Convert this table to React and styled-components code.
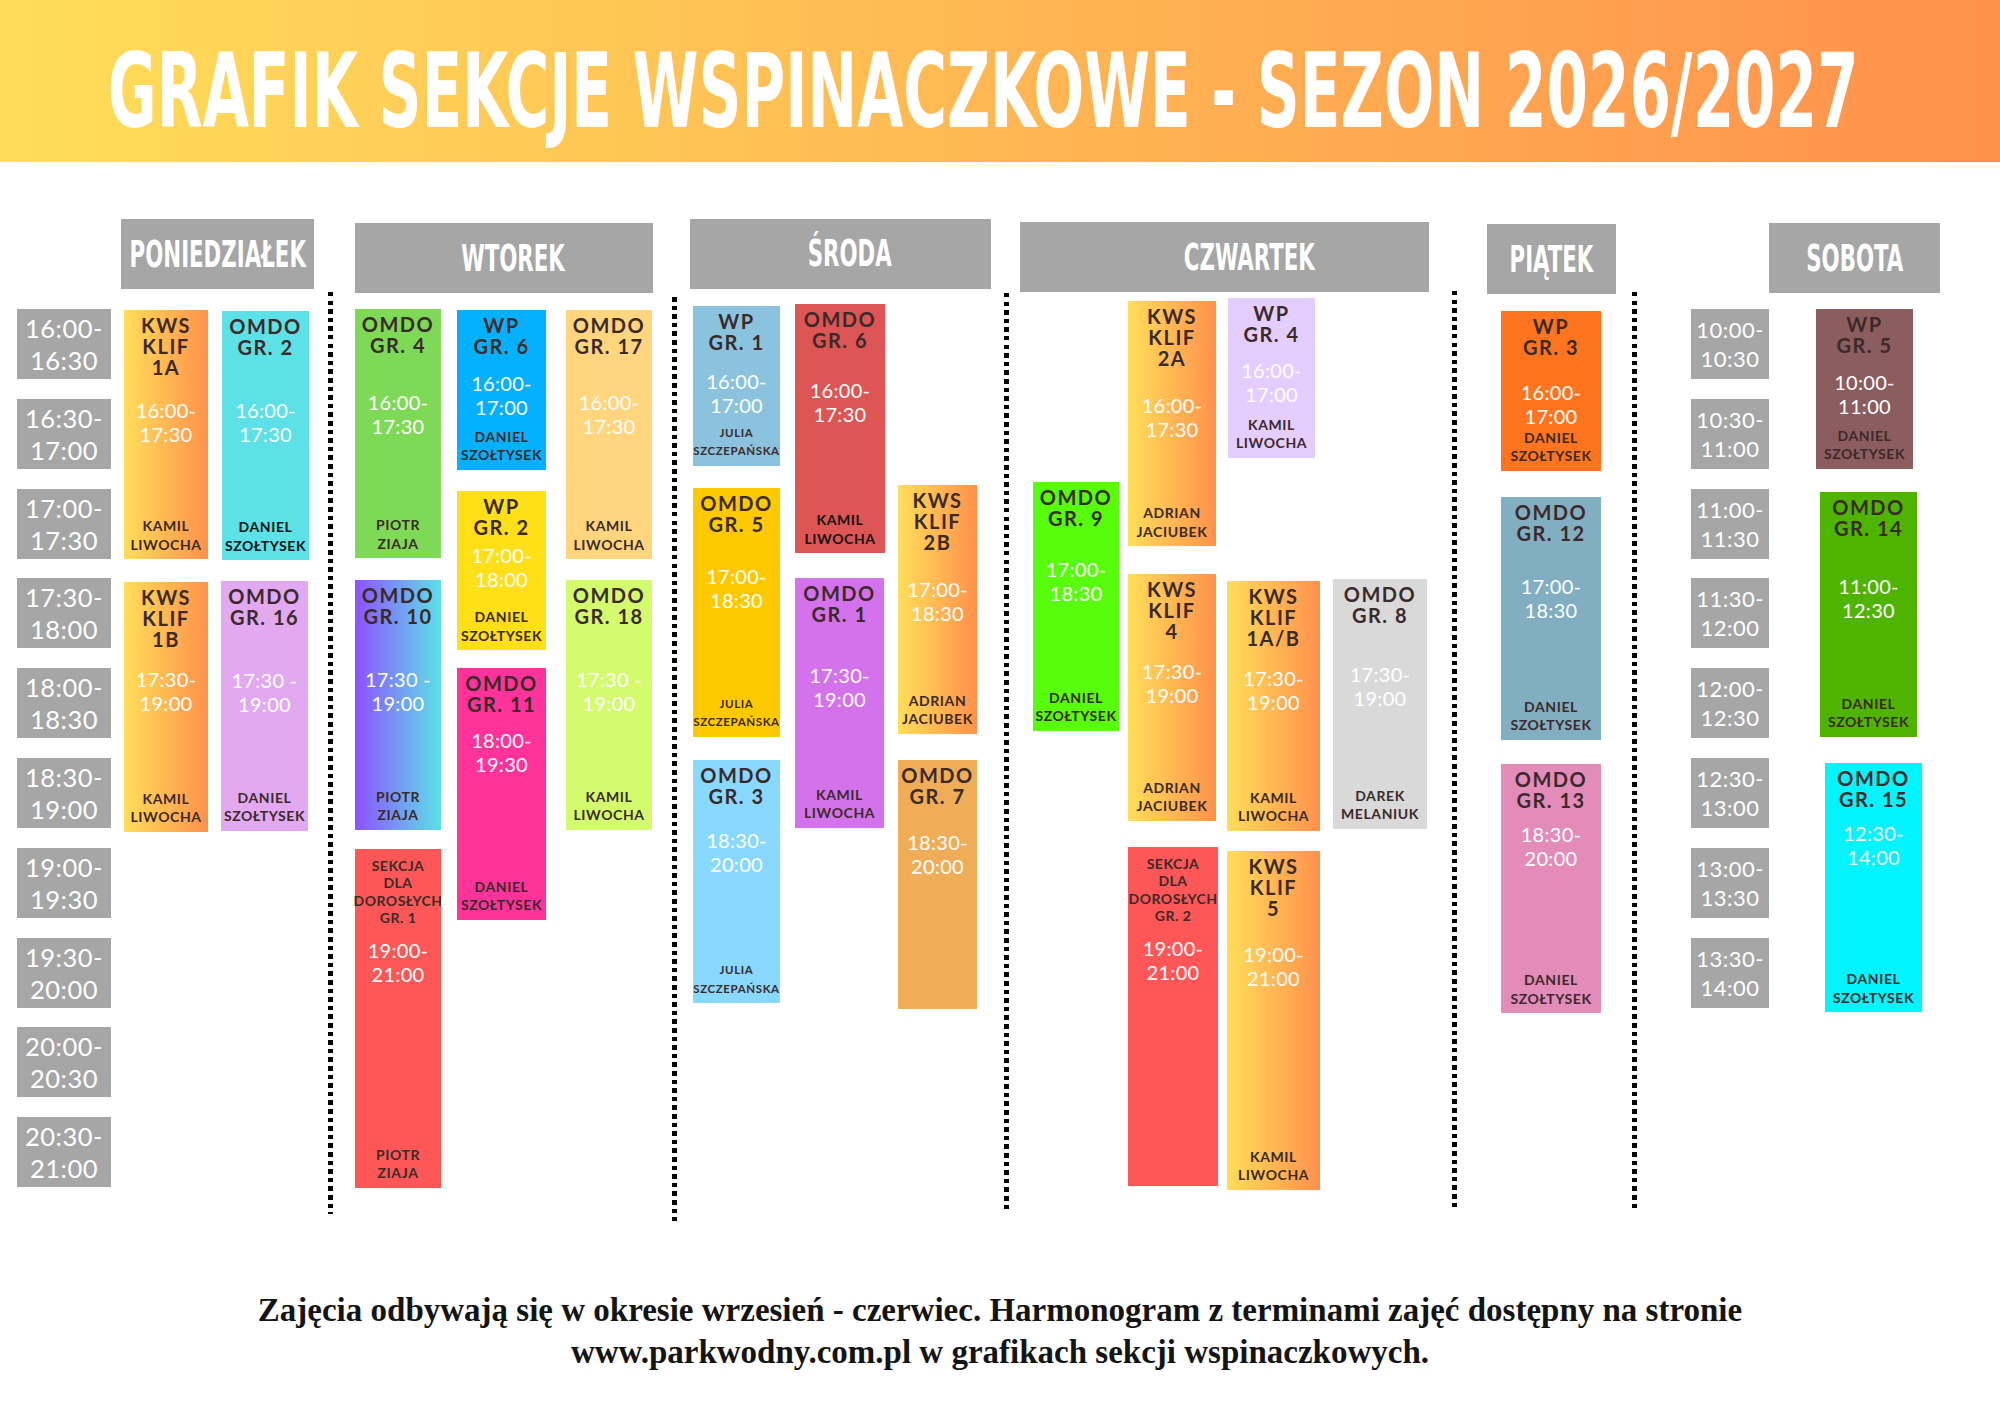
import React from "react";
import styled, { createGlobalStyle } from "styled-components";

const P = 89.8;
const KWS = "linear-gradient(90deg, #FFDE59 0%, #FF914D 100%)";
const TITLE_PAD = 5;
const TITLE_LH = 21;

const Global = createGlobalStyle`
  html, body { margin: 0; padding: 0; background: #fff; }
  body { width: 2000px; height: 1414px; overflow: hidden; font-family: Lato, "Noto Sans", sans-serif; }
  * { box-sizing: border-box; }
`;

const Page = styled.div`
  width: 2000px;
  height: 1414px;
  display: flex;
  flex-direction: column;
  background: #fff;
  overflow: hidden;
`;

const Banner = styled.header`
  flex: none;
  height: 162px;
  background: linear-gradient(90deg, #ffde59 0%, #ff914d 100%);
  display: flex;
  justify-content: center;
  align-items: flex-start;
  padding-top: 39px;
  overflow: hidden;
`;

const BannerTitle = styled.h1`
  margin: 0 0 0 -34px;
  flex: none;
  font-family: "DejaVu Sans Condensed", "DejaVu Sans", sans-serif;
  font-weight: 700;
  font-size: 104px;
  line-height: 104px;
  color: #fff;
  white-space: nowrap;
  transform: scaleX(0.637);
  transform-origin: center top;
`;

const Schedule = styled.section`
  flex: none;
  height: 1067px;
  display: flex;
  align-items: flex-start;
`;

const TimeColumn = styled.div`
  flex: none;
  width: ${(p) => p.$w}px;
  margin-left: ${(p) => p.$ml}px;
  padding-top: 147px;
  display: flex;
  flex-direction: column;
  gap: ${P - 70}px;
`;

const TimeBox = styled.div`
  height: 70px;
  background: #a6a6a6;
  color: #fff;
  display: flex;
  align-items: center;
  justify-content: center;
  text-align: center;
  white-space: pre-line;
  font-family: Lato, sans-serif;
  font-weight: 400;
  font-size: ${(p) => (p.$small ? 22 : 25.5)}px;
  line-height: ${(p) => (p.$small ? 29 : 32)}px;
  letter-spacing: 0.5px;
`;

const DayGroup = styled.div`
  flex: none;
  width: ${(p) => p.$w}px;
  margin-left: ${(p) => p.$ml}px;
  display: flex;
  flex-direction: column;
`;

const HeaderZone = styled.div`
  height: 147px;
  flex: none;
`;

const DayHeader = styled.div`
  margin-top: ${(p) => p.$mt}px;
  height: 70px;
  background: #a6a6a6;
  display: flex;
  align-items: center;
  justify-content: center;
  overflow: hidden;
`;

const DayLabel = styled.span`
  flex: none;
  font-family: "DejaVu Sans Condensed", "DejaVu Sans", sans-serif;
  font-weight: 700;
  font-size: 37px;
  line-height: 1;
  color: #fff;
  white-space: nowrap;
  transform: scaleX(0.64);
  margin-top: ${(p) => p.$dy || 0}px;
  margin-left: ${(p) => (p.$dx || 0) * 2}px;
`;

const Lanes = styled.div`
  height: 920px;
  display: flex;
`;

const Lane = styled.div`
  position: relative;
  flex: none;
  width: ${(p) => p.$w}px;
  margin-left: ${(p) => p.$ml}px;
`;

const Block = styled.div`
  position: absolute;
  display: flex;
  flex-direction: column;
  align-items: center;
  text-align: center;
  padding: ${TITLE_PAD}px 0 5px;
  background: ${(p) => p.$bg};
  white-space: pre-line;
`;

const BlockTitle = styled.div`
  font-family: Lato, sans-serif;
  font-weight: 700;
  color: #3b2a2a;
  font-size: ${(p) => (p.$small ? 14 : 20)}px;
  line-height: ${(p) => (p.$small ? 17.5 : TITLE_LH)}px;
  letter-spacing: ${(p) => (p.$small ? 0.5 : 1.5)}px;
  margin-top: ${(p) => (p.$small ? 3 : 0)}px;
`;

const BlockTime = styled.div`
  font-family: Lato, sans-serif;
  font-weight: 400;
  color: #fff;
  font-size: 20px;
  line-height: 24px;
  letter-spacing: 0.3px;
`;

const BlockName = styled.div`
  margin-top: auto;
  font-family: Lato, sans-serif;
  font-weight: 700;
  color: ${(p) => p.$c || "#3b2a2a"};
  font-size: ${(p) => p.$size || 14}px;
  line-height: 18.5px;
  letter-spacing: 0.6px;
`;

const Divider = styled.div`
  flex: none;
  width: 5px;
  margin-left: ${(p) => p.$ml}px;
  margin-top: ${(p) => p.$top - 162}px;
  height: ${(p) => p.$h}px;
  background: repeating-linear-gradient(to bottom, #000 0 4.5px, transparent 4.5px 8.6px);
`;

const Footer = styled.footer`
  flex: none;
  margin-top: 60px;
  text-align: center;
  font-family: "Liberation Serif", "DejaVu Serif", serif;
  font-weight: 700;
  font-size: 33px;
  line-height: 42px;
  color: #141414;
`;

const DS = "DANIEL\nSZOŁTYSEK";
const KL = "KAMIL\nLIWOCHA";
const PZ = "PIOTR\nZIAJA";
const JS = "JULIA\nSZCZEPAŃSKA";
const AJ = "ADRIAN\nJACIUBEK";

const days = [
  {
    label: "PONIEDZIAŁEK", ml: 10, w: 193, top: 219,
    lanes: [
      { ml: 3, w: 84, blocks: [
        { t: "KWS\nKLIF\n1A", time: "16:00-\n17:30", name: KL, bg: KWS, s: 0, n: 3, dy: 1, at: 93 },
        { t: "KWS\nKLIF\n1B", time: "17:30-\n19:00", name: KL, bg: KWS, s: 3, n: 3, dy: 4, at: 90 },
      ] },
      { ml: 14, w: 87, blocks: [
        { t: "OMDO\nGR. 2", time: "16:00-\n17:30", name: DS, bg: "#5CE1E6", s: 0, n: 3, dy: 2, at: 92, nc: "#141414" },
        { t: "OMDO\nGR. 16", time: "17:30 -\n19:00", name: DS, bg: "#E2A9F0", s: 3, n: 3, dy: 3, dx: -1, at: 92 },
      ] },
    ],
  },
  {
    label: "WTOREK", ml: 22, w: 298, top: 223, labelDx: 9, divider: { ml: 14, top: 292, h: 922 },
    lanes: [
      { ml: 0, w: 86, blocks: [
        { t: "OMDO\nGR. 4", time: "16:00-\n17:30", name: PZ, bg: "#7ED957", s: 0, n: 3, dy: 0, at: 86 },
        { t: "OMDO\nGR. 10", time: "17:30 -\n19:00", name: PZ, bg: "linear-gradient(90deg, #8C52FF 0%, #5CE1E6 100%)", s: 3, n: 3, dy: 2, at: 92 },
        { t: "SEKCJA\nDLA\nDOROSŁYCH\nGR. 1", time: "19:00-\n21:00", name: PZ, bg: "#FF5757", s: 6, n: 4, dy: 1, at: 95, small: true },
      ] },
      { ml: 16, w: 89, blocks: [
        { t: "WP\nGR. 6", time: "16:00-\n17:00", name: DS, bg: "#05B0FF", s: 0, n: 2, dy: 1, at: 66 },
        { t: "WP\nGR. 2", time: "17:00-\n18:00", name: DS, bg: "#FFDF17", s: 2, n: 2, dy: 2, at: 58 },
        { t: "OMDO\nGR. 11", time: "18:00-\n19:30", name: DS, bg: "#FF3399", s: 4, n: 3, dy: 0, dh: 2, at: 65 },
      ] },
      { ml: 20, w: 86, blocks: [
        { t: "OMDO\nGR. 17", time: "16:00-\n17:30", name: KL, bg: "#FFD67E", s: 0, n: 3, dy: 1, at: 85 },
        { t: "OMDO\nGR. 18", time: "17:30 -\n19:00", name: KL, bg: "#D4FB6E", s: 3, n: 3, dy: 2, at: 92 },
      ] },
    ],
  },
  {
    label: "ŚRODA", ml: 13, w: 301, top: 219, labelDy: -2, labelDx: 9, divider: { ml: 19, top: 297, h: 924 },
    lanes: [
      { ml: 3, w: 87, blocks: [
        { t: "WP\nGR. 1", time: "16:00-\n17:00", name: JS, bg: "#8BC3DE", s: 0, n: 2, dy: -3, at: 68, ns: 11.5 },
        { t: "OMDO\nGR. 5", time: "17:00-\n18:30", name: JS, bg: "#FFC900", s: 2, n: 3, dy: -1, at: 82, ns: 11.5 },
        { t: "OMDO\nGR. 3", time: "18:30-\n20:00", name: JS, bg: "#89D9FF", s: 5, n: 3, dy: 2, dh: -6, at: 73, ns: 11.5 },
      ] },
      { ml: 15, w: 90, blocks: [
        { t: "OMDO\nGR. 6", time: "16:00-\n17:30", name: KL, bg: "#DD5555", s: 0, n: 3, dy: -5, at: 79, nc: "#141414" },
        { t: "OMDO\nGR. 1", time: "17:30-\n19:00", name: KL, bg: "#D472EC", s: 3, n: 3, dy: 0, w: 89, at: 90 },
      ] },
      { ml: 13, w: 79, blocks: [
        { t: "KWS\nKLIF\n2B", time: "17:00-\n18:30", name: AJ, bg: KWS, s: 2, n: 3, dy: -4, at: 98 },
        { t: "OMDO\nGR. 7", time: "18:30-\n20:00", name: "", bg: "#F0AD57", s: 5, n: 3, dy: 2, at: 75 },
      ] },
    ],
  },
  {
    label: "CZWARTEK", ml: 11, w: 409, top: 222, labelDx: 25, divider: { ml: 13, top: 293, h: 919 },
    lanes: [
      { ml: 13, w: 86, blocks: [
        { t: "OMDO\nGR. 9", time: "17:00-\n18:30", name: DS, bg: "#57FD0B", s: 2, n: 3, dy: -7, at: 81 },
      ] },
      { ml: 9, w: 88, blocks: [
        { t: "KWS\nKLIF\n2A", time: "16:00-\n17:30", name: AJ, bg: KWS, s: 0, n: 3, dy: -8, dh: -4, at: 97 },
        { t: "KWS\nKLIF\n4", time: "17:30-\n19:00", name: AJ, bg: KWS, s: 3, n: 3, dy: -4, dh: -3, at: 90 },
        { t: "SEKCJA\nDLA\nDOROSŁYCH\nGR. 2", time: "19:00-\n21:00", name: "", bg: "#FF5757", s: 6, n: 4, dy: -1, w: 90, at: 95, small: true },
      ] },
      { ml: 11, w: 93, blocks: [
        { t: "WP\nGR. 4", time: "16:00-\n17:00", name: KL, bg: "#E4CDFF", s: 0, n: 2, dy: -11, dx: 1, w: 87, at: 65 },
        { t: "KWS\nKLIF\n1A/B", time: "17:30-\n19:00", name: KL, bg: KWS, s: 3, n: 3, dy: 3, at: 90 },
        { t: "KWS\nKLIF\n5", time: "19:00-\n21:00", name: KL, bg: KWS, s: 6, n: 4, dy: 3, at: 97 },
      ] },
      { ml: 13, w: 94, blocks: [
        { t: "OMDO\nGR. 8", time: "17:30-\n19:00", name: "DAREK\nMELANIUK", bg: "#D9D9D9", s: 3, n: 3, dy: 1, at: 88 },
      ] },
    ],
  },
  {
    label: "PIĄTEK", ml: 30.5, w: 129, top: 224, divider: { ml: 22.5, top: 291, h: 918 },
    lanes: [
      { ml: 14, w: 100, blocks: [
        { t: "WP\nGR. 3", time: "16:00-\n17:00", name: DS, bg: "#FF751F", s: 0, n: 2, dy: 2, at: 74 },
        { t: "OMDO\nGR. 12", time: "17:00-\n18:30", name: DS, bg: "#82AEC2", s: 2, n: 3, dy: 8, dh: -6, at: 83 },
        { t: "OMDO\nGR. 13", time: "18:30-\n20:00", name: DS, bg: "#E38CBA", s: 5, n: 3, dy: 6, at: 63 },
      ] },
    ],
  },
];

const saturday = {
  label: "SOBOTA", ml: 0, w: 171, top: 223,
  lanes: [
    { ml: 47, w: 97, blocks: [
      { t: "WP\nGR. 5", time: "10:00-\n11:00", name: DS, bg: "#8C5D5E", s: 0, n: 2, dy: 0, at: 66 },
      { t: "OMDO\nGR. 14", time: "11:00-\n12:30", name: DS, bg: "#4FB400", s: 2, n: 3, dy: 3, dh: -4, dx: 4, at: 88 },
      { t: "OMDO\nGR. 15", time: "12:30-\n14:00", name: DS, bg: "#00F5FF", s: 5, n: 3, dy: 5, dx: 9, at: 63 },
    ] },
  ],
};

const monTimes = ["16:00-\n16:30", "16:30-\n17:00", "17:00-\n17:30", "17:30-\n18:00", "18:00-\n18:30", "18:30-\n19:00", "19:00-\n19:30", "19:30-\n20:00", "20:00-\n20:30", "20:30-\n21:00"];
const satTimes = ["10:00-\n10:30", "10:30-\n11:00", "11:00-\n11:30", "11:30-\n12:00", "12:00-\n12:30", "12:30-\n13:00", "13:00-\n13:30", "13:30-\n14:00"];

function ClassBlock({ b, laneW }) {
  const top = b.s * P + (b.dy || 0);
  const height = b.n * P - 20 + (b.dh || 0);
  const lines = b.t.split("\n").length;
  const titleEnd = b.small ? TITLE_PAD + 3 + lines * 17.5 : TITLE_PAD + lines * TITLE_LH;
  const timeMargin = b.at - 5.4 - titleEnd;
  return (
    <Block
      $bg={b.bg}
      style={{ top, height, left: b.dx || 0, width: b.w || laneW }}
    >
      <BlockTitle $small={b.small}>{b.t}</BlockTitle>
      <BlockTime style={{ marginTop: timeMargin }}>{b.time}</BlockTime>
      {b.name ? <BlockName $c={b.nc} $size={b.ns}>{b.name}</BlockName> : null}
    </Block>
  );
}

function Day({ d }) {
  return (
    <DayGroup $ml={d.ml} $w={d.w}>
      <HeaderZone>
        <DayHeader $mt={d.top - 162}>
          <DayLabel $dy={d.labelDy} $dx={d.labelDx}>{d.label}</DayLabel>
        </DayHeader>
      </HeaderZone>
      <Lanes>
        {d.lanes.map((l, i) => (
          <Lane key={i} $ml={l.ml} $w={l.w}>
            {l.blocks.map((b, j) => (
              <ClassBlock key={j} b={b} laneW={l.w} />
            ))}
          </Lane>
        ))}
      </Lanes>
    </DayGroup>
  );
}

export default function App() {
  return (
    <Page>
      <Global />
      <Banner>
        <BannerTitle>GRAFIK SEKCJE WSPINACZKOWE - SEZON 2026/2027</BannerTitle>
      </Banner>
      <Schedule>
        <TimeColumn $ml={17} $w={94}>
          {monTimes.map((t) => (
            <TimeBox key={t}>{t}</TimeBox>
          ))}
        </TimeColumn>
        {days.map((d) => (
          <React.Fragment key={d.label}>
            {d.divider ? <Divider $ml={d.divider.ml} $top={d.divider.top} $h={d.divider.h} /> : null}
            <Day d={d} />
          </React.Fragment>
        ))}
        <Divider $ml={16} $top={292} $h={917} />
        <TimeColumn $ml={54} $w={78}>
          {satTimes.map((t) => (
            <TimeBox key={t} $small>{t}</TimeBox>
          ))}
        </TimeColumn>
        <Day d={saturday} />
      </Schedule>
      <Footer>
        Zajęcia odbywają się w okresie wrzesień - czerwiec. Harmonogram z terminami zajęć dostępny na stronie
        <br />
        www.parkwodny.com.pl w grafikach sekcji wspinaczkowych.
      </Footer>
    </Page>
  );
}
